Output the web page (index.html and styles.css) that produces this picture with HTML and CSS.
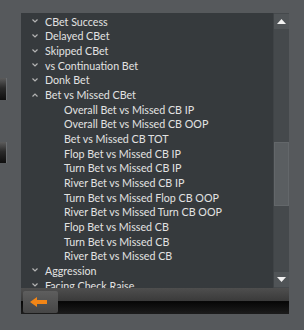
FILE: index.html
```html
<!DOCTYPE html>
<html lang="en">
<head>
    <meta charset="UTF-8">
    <title>Stats tree</title>
    <link rel="stylesheet" href="styles.css">
</head>
<body>
    <div class="window">
        <div class="side">
            <div class="stub stub-a"></div>
            <div class="stub stub-b"></div>
        </div>
        <div class="main">
            <div class="listbox">
                <ul class="tree">
                    <li class="row"><span class="chev down"></span>CBet Success</li>
                    <li class="row"><span class="chev down"></span>Delayed CBet</li>
                    <li class="row"><span class="chev down"></span>Skipped CBet</li>
                    <li class="row"><span class="chev down"></span>vs Continuation Bet</li>
                    <li class="row"><span class="chev down"></span>Donk Bet</li>
                    <li class="row"><span class="chev up"></span>Bet vs Missed CBet</li>
                    <li class="row child">Overall Bet vs Missed CB IP</li>
                    <li class="row child">Overall Bet vs Missed CB OOP</li>
                    <li class="row child">Bet vs Missed CB TOT</li>
                    <li class="row child">Flop Bet vs Missed CB IP</li>
                    <li class="row child">Turn Bet vs Missed CB IP</li>
                    <li class="row child">River Bet vs Missed CB IP</li>
                    <li class="row child">Turn Bet vs Missed Flop CB OOP</li>
                    <li class="row child">River Bet vs Missed Turn CB OOP</li>
                    <li class="row child">Flop Bet vs Missed CB</li>
                    <li class="row child">Turn Bet vs Missed CB</li>
                    <li class="row child">River Bet vs Missed CB</li>
                    <li class="row"><span class="chev down"></span>Aggression</li>
                    <li class="row"><span class="chev down"></span>Facing Check Raise</li>
                </ul>
                <div class="vscroll">
                    <div class="sb-btn">
                        <svg width="9" height="5" viewBox="0 0 9 5"><polygon points="0,5 4.5,0 9,5" fill="#f2f2f2"/></svg>
                    </div>
                    <div class="sb-track">
                        <div class="sb-thumb"></div>
                    </div>
                    <div class="sb-btn">
                        <svg width="9" height="5" viewBox="0 0 9 5"><polygon points="0,0 9,0 4.5,5" fill="#f2f2f2"/></svg>
                    </div>
                </div>
            </div>
            <div class="toolbar">
                <button class="back-btn">
                    <svg width="18" height="10" viewBox="0 0 18 10"><polygon points="0,5 7,0 7,3 17,3 17,7 7,7 7,10" fill="#f28516"/></svg>
                </button>
            </div>
        </div>
    </div>
</body>
</html>
```

FILE: styles.css
```css
body {
    margin: 0;
    background-color: #56595c;
    font-family: 'Lato', 'Segoe UI', sans-serif;
    font-size: 10.7px;
    color: #e2e2e2;
}
.window {
    display: flex;
    padding-top: 13px;
    height: 317px;
}
.side {
    width: 21px;
}
.stub {
    width: 6px;
    border-right: 1px solid #6a6d70;
    background: linear-gradient(#5c5c5c 0%, #2a2a2a 45%, #0e0e0e 100%);
}
.stub-a {
    height: 22px;
    margin-top: 65px;
}
.stub-b {
    height: 21px;
    margin-top: 42px;
}
.main {
    width: 268px;
}
.listbox {
    display: flex;
    height: 275px;
    background-color: #363a3d;
}
.tree {
    flex: 1;
    list-style: none;
    margin: 0;
    padding: 1px 0 0;
    overflow: hidden;
}
.row {
    display: flex;
    align-items: center;
    height: 14.67px;
    padding-left: 10px;
    white-space: nowrap;
}
.row.child {
    padding-left: 43px;
}
.chev {
    width: 14px;
    height: 14px;
    flex-shrink: 0;
    background-repeat: no-repeat;
    background-position: 1px center;
}
.chev.down {
    background-image: url("data:image/svg+xml,%3Csvg xmlns='http://www.w3.org/2000/svg' width='6' height='4'%3E%3Cpolyline points='0.5,0.5 3,3 5.5,0.5' fill='none' stroke='%23b4b4b4' stroke-width='1.2'/%3E%3C/svg%3E");
}
.chev.up {
    background-image: url("data:image/svg+xml,%3Csvg xmlns='http://www.w3.org/2000/svg' width='6' height='4'%3E%3Cpolyline points='0.5,3.5 3,1 5.5,3.5' fill='none' stroke='%23b4b4b4' stroke-width='1.2'/%3E%3C/svg%3E");
}
.vscroll {
    display: flex;
    flex-direction: column;
    width: 16px;
    background-color: #45494c;
    border-left: 1px solid #3f4346;
    box-sizing: border-box;
}
.sb-btn {
    display: flex;
    align-items: center;
    justify-content: center;
    height: 15px;
    margin-top: 1px;
    background-color: #505457;
}
.sb-btn:last-child {
    margin-top: 0;
    margin-bottom: 1px;
}
.sb-track {
    flex: 1;
}
.sb-thumb {
    height: 64px;
    margin-top: 113px;
    background-color: #5a5e61;
    border: 1px solid #63676a;
    box-sizing: border-box;
}
.toolbar {
    display: flex;
    align-items: center;
    height: 26px;
    padding-left: 2px;
    background: linear-gradient(#4e4e4e 0%, #3a3a3a 50%, #060606 52%, #1c1c1c 100%);
}
.back-btn {
    display: flex;
    align-items: center;
    justify-content: center;
    width: 35px;
    height: 22px;
    margin-top: 1px;
    padding: 0 4px 0 0;
    border: none;
    border-radius: 2px;
    background: linear-gradient(#5e5e5e, #464646);
}
```
